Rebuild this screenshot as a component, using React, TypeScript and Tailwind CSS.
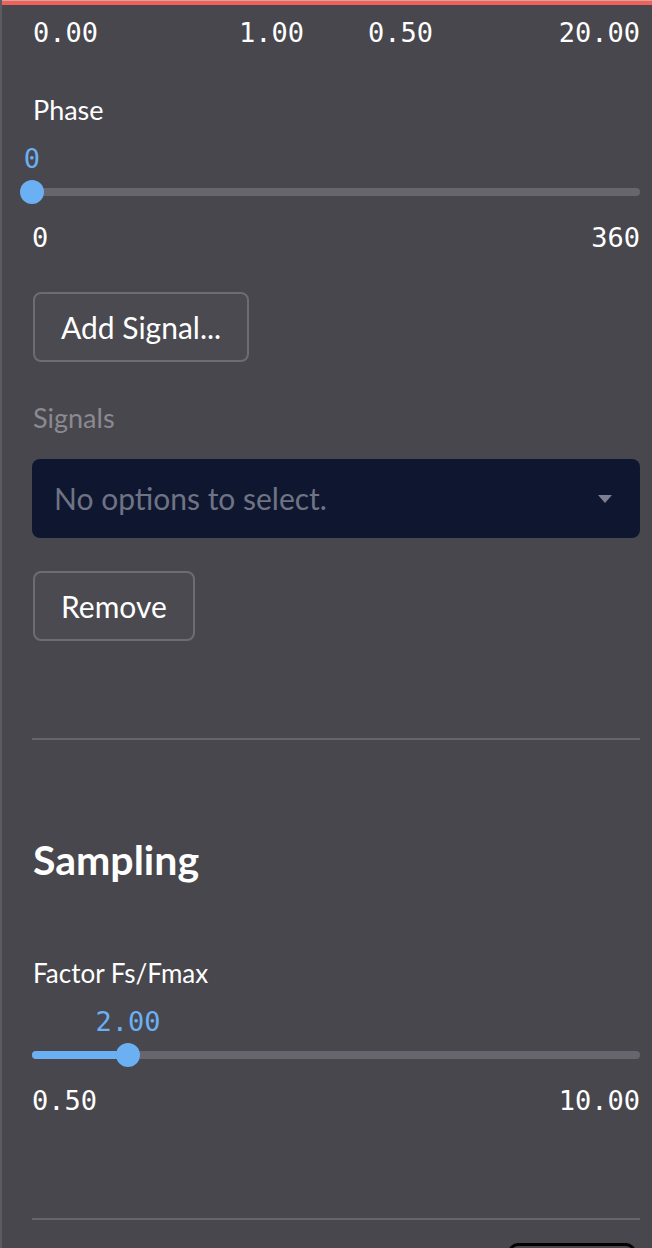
import React from "react";

const sans = "font-['Lato','Noto_Sans',sans-serif]";
const mono = "font-['DejaVu_Sans_Mono','Liberation_Mono',monospace]";

function Slider({ min, max, value, pct }: { min: string; max: string; value: string; pct: number }) {
  return (
    <div className="flex flex-col">
      <div className="relative h-10">
        <span
          className={`absolute top-1/2 -translate-x-1/2 -translate-y-1/2 ${mono} text-[27px] leading-none text-[#6cb0f4]`}
          style={{ left: `${pct}%` }}
        >
          {value}
        </span>
      </div>
      <div className="relative h-7 flex items-center">
        <div className="h-[8px] w-full rounded-full bg-[#67666f]" />
        <div
          className="absolute left-0 h-[8px] rounded-full bg-[#6cb0f4]"
          style={{ width: `${pct}%` }}
        />
        <div
          className="absolute h-[24px] w-[24px] -translate-x-1/2 rounded-full bg-[#6cb0f4]"
          style={{ left: `${pct}%` }}
        />
      </div>
      <div className={`mt-3 flex h-10 items-center justify-between ${mono} text-[27px] text-white`}>
        <span>{min}</span>
        <span>{max}</span>
      </div>
    </div>
  );
}

function Btn({ children }: { children: React.ReactNode }) {
  return (
    <button className={`h-[70px] rounded-[8px] border-2 border-[#6d6c73] bg-[#4b4a50] px-[26px] ${sans} text-[30px] text-white`}>
      {children}
    </button>
  );
}

export default function App() {
  return (
    <div className="h-[1248px] w-[652px] overflow-hidden bg-[#48474d] border-l-2 border-[#5c5b61]">
      <div className="h-px bg-[#d6a69e]" />
      <div className="h-[4px] bg-[#f0615b]" />
      <div className="pl-[30px] pr-[12px] flex flex-col">
        <div className={`grid h-[56px] grid-cols-2 gap-[64px] ${mono} text-[27px] text-white`}>
          <div className="flex items-center justify-between pl-px">
            <span>0.00</span>
            <span>1.00</span>
          </div>
          <div className="flex items-center justify-between">
            <span>0.50</span>
            <span>20.00</span>
          </div>
        </div>

        <div className={`mt-[29px] flex h-10 items-center pl-px ${sans} text-[27px] text-white`}>Phase</div>
        <div className="mt-2">
          <Slider min="0" max="360" value="0" pct={0} />
        </div>

        <div className="mt-[34px] flex pl-px">
          <Btn>Add Signal...</Btn>
        </div>

        <div className={`mt-[36px] flex h-10 items-center pl-px ${sans} text-[27px] text-[#8b8a90]`}>Signals</div>
        <div className="mt-[21px] flex h-[79px] items-center justify-between rounded-[8px] bg-[#0f1730] pl-[22px] pr-[28px]">
          <span className={`${sans} text-[30px] text-[#6f7384]`}>No options to select.</span>
          <svg width="14" height="8" viewBox="0 0 14 8">
            <path d="M0 0 L14 0 L7 8 Z" fill="#7d8091" />
          </svg>
        </div>

        <div className="mt-[33px] flex pl-px">
          <Btn>Remove</Btn>
        </div>

        <div className="mt-[97px] h-[2px] bg-[#67666c]" />

        <div className={`mt-[92px] flex h-[56px] items-center pl-px ${sans} text-[41px] font-bold text-white`}>Sampling</div>

        <div className={`mt-[65px] flex h-10 items-center pl-px ${sans} text-[26px] text-white`}>Factor Fs/Fmax</div>
        <div className="mt-2">
          <Slider min="0.50" max="10.00" value="2.00" pct={15.8} />
        </div>

        <div className="mt-[97px] h-[2px] bg-[#67666c]" />

        <div className="mt-[23px] flex justify-end pr-[4px]">
          <div className="h-[70px] w-[128px] rounded-[10px] border-[3px] border-black" />
        </div>
      </div>
    </div>
  );
}
